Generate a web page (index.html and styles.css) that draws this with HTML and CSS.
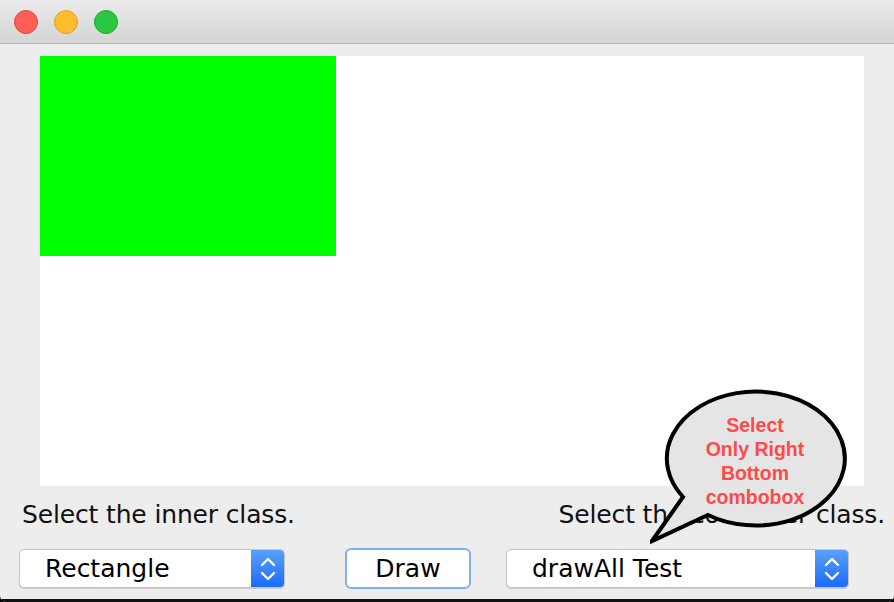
FILE: index.html
```html
<!DOCTYPE html>
<html>
<head>
<meta charset="utf-8">
<link rel="stylesheet" href="styles.css">
</head>
<body>
<div class="window">
  <div class="titlebar">
    <span class="light red"></span>
    <span class="light yellow"></span>
    <span class="light green"></span>
  </div>
  <div class="content">
    <div class="canvas">
      <div class="shape"></div>
    </div>
    <div class="labels">
      <span class="label">Select the inner class.</span>
      <span class="label">Select the container class.</span>
    </div>
    <div class="controls">
      <div class="combo combo-left">
        <span class="combo-text">Rectangle</span>
        <span class="combo-arrow">
          <svg width="16" height="28" viewBox="0 0 16 28"><path d="M2 10 L8 4 L14 10 M2 18 L8 24 L14 18" fill="none" stroke="#fff" stroke-width="2.4" stroke-linecap="round" stroke-linejoin="round"/></svg>
        </span>
      </div>
      <button class="btn">Draw</button>
      <div class="combo combo-right">
        <span class="combo-text">drawAll Test</span>
        <span class="combo-arrow">
          <svg width="16" height="28" viewBox="0 0 16 28"><path d="M2 10 L8 4 L14 10 M2 18 L8 24 L14 18" fill="none" stroke="#fff" stroke-width="2.4" stroke-linecap="round" stroke-linejoin="round"/></svg>
        </span>
      </div>
    </div>
    <div class="bubble">
      <svg class="bubble-shape" width="200" height="160" viewBox="0 0 200 160">
        <path d="M33 109 A 89 67 0 1 1 58 127 L 2 153 Z" fill="#e5e5e5" stroke="#000" stroke-width="4" stroke-linejoin="miter"/>
      </svg>
      <div class="bubble-text">Select<br>Only Right<br>Bottom<br>combobox</div>
    </div>
  </div>
  <div class="bottom-edge"></div>
</div>
</body>
</html>
```
FILE: styles.css
```css
html, body {
  margin: 0;
  padding: 0;
  width: 894px;
  height: 602px;
  overflow: hidden;
  background: #000;
}
.window {
  width: 894px;
  height: 602px;
  display: flex;
  flex-direction: column;
  background: #ededed;
  font-family: "DejaVu Sans", "Liberation Sans", sans-serif;
  border-radius: 0 0 6px 6px;
  overflow: hidden;
}
.titlebar {
  flex: none;
  height: 44px;
  box-sizing: border-box;
  background: linear-gradient(#ebebeb, #d4d4d4);
  border-bottom: 1px solid #b1b1b1;
  display: flex;
  align-items: center;
  padding-left: 14px;
  gap: 16px;
}
.light {
  width: 24px;
  height: 24px;
  border-radius: 50%;
  box-sizing: border-box;
}
.red { background: #fe5f57; border: 1px solid #e0443e; }
.yellow { background: #febc2e; border: 1px solid #dea123; }
.green { background: #28c840; border: 1px solid #1aab29; }
.content {
  position: relative;
  flex: 1;
  display: flex;
  flex-direction: column;
}
.canvas {
  margin: 12px 0 0 40px;
  width: 824px;
  height: 430px;
  background: #fff;
}
.shape {
  width: 296px;
  height: 200px;
  background: #00ff00;
}
.labels {
  display: flex;
  justify-content: space-between;
  padding: 0 9px 0 22px;
  margin-top: 14px;
  height: 30px;
}
.label {
  font-size: 25px;
  letter-spacing: -0.15px;
  color: #111;
  line-height: 30px;
  white-space: nowrap;
}
.controls {
  display: flex;
  align-items: center;
  padding-left: 19px;
  margin-top: 18px;
}
.combo {
  height: 39px;
  background: #fff;
  border: 1px solid #c4c4c4;
  border-radius: 5px;
  box-sizing: border-box;
  display: flex;
  align-items: center;
  overflow: hidden;
  box-shadow: 0 1px 1px rgba(0,0,0,0.15);
}
.combo-left { width: 266px; }
.combo-right { width: 343px; margin-left: 35px; }
.combo-text {
  flex: 1;
  padding-left: 25px;
  font-size: 25px;
  color: #000;
  white-space: nowrap;
}
.combo-arrow {
  width: 33px;
  align-self: stretch;
  background: linear-gradient(#5aa0fb, #1a6bf9);
  display: flex;
  align-items: center;
  justify-content: center;
}
.btn {
  margin-left: 60px;
  width: 126px;
  height: 41px;
  background: #fff;
  border: 2px solid #7fb2ec;
  border-radius: 6px;
  font-family: "DejaVu Sans", "Liberation Sans", sans-serif;
  font-size: 25px;
  color: #000;
  padding: 0;
}
.bubble {
  position: absolute;
  left: 650px;
  top: 344px;
  width: 200px;
  height: 160px;
}
.bubble-shape {
  position: absolute;
  left: 0;
  top: 0;
}
.bubble-text {
  position: absolute;
  left: 25px;
  top: 25px;
  width: 160px;
  text-align: center;
  font-family: "Liberation Sans", Arial, sans-serif;
  font-weight: bold;
  font-size: 19.5px;
  line-height: 24px;
  color: #fe4a4a;
}
.bottom-edge {
  height: 3px;
  flex: none;
  background: #111;
}
```
